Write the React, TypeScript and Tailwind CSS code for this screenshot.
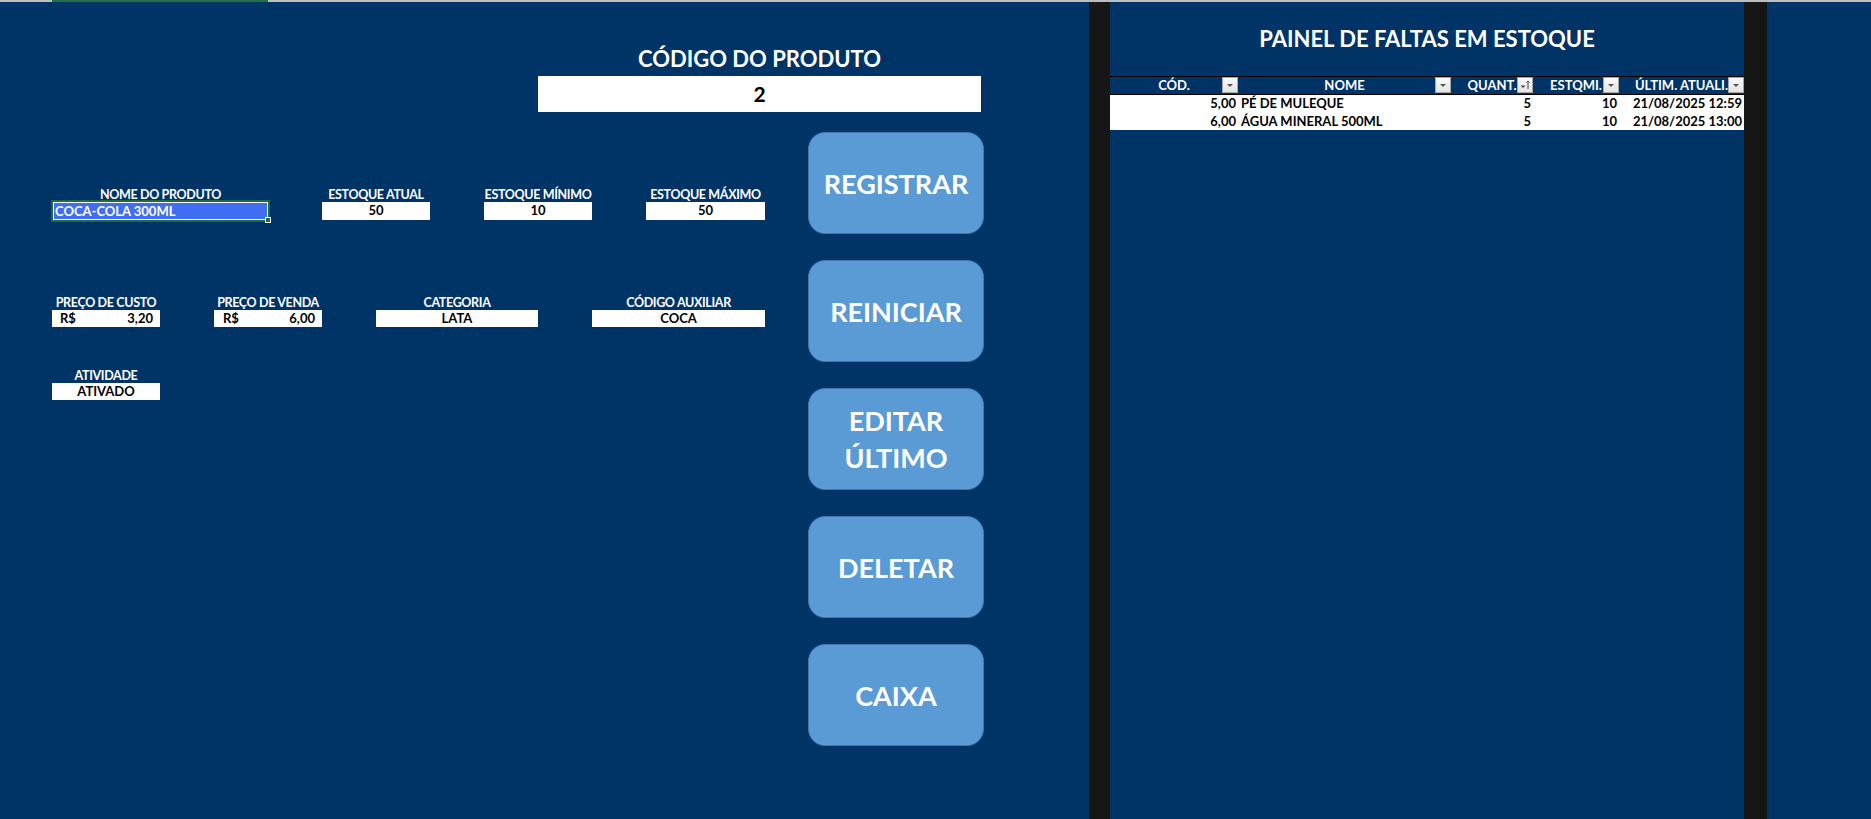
import React from 'react';

const FONT = { fontFamily: 'Lato, "Open Sans", "Liberation Sans", sans-serif' };

function Label({ text, clip }: { text: string; clip?: boolean }) {
  return (
    <div
      className={
        'h-[15px] w-full whitespace-nowrap text-center text-[12.5px] leading-[15px] tracking-[-0.35px] font-bold text-white ' +
        (clip ? 'overflow-hidden' : '')
      }
    >
      {text}
    </div>
  );
}

function Field({
  label,
  value,
  width,
  tall,
  clip,
}: {
  label: string;
  value: string;
  width: string;
  tall?: boolean;
  clip?: boolean;
}) {
  return (
    <div className={'flex flex-col ' + width}>
      <Label text={label} clip={clip} />
      <div
        className={
          'flex w-full items-center justify-center bg-white text-[13px] font-bold text-black ' +
          (tall ? 'h-[18px]' : 'h-[17px]')
        }
      >
        {value}
      </div>
    </div>
  );
}

function MoneyField({ label, value, pl }: { label: string; value: string; pl: string }) {
  return (
    <div className="flex w-[108px] flex-col">
      <Label text={label} />
      <div className={'flex h-[17px] w-full items-center justify-between bg-white pr-[7px] text-[13px] font-bold text-black ' + pl}>
        <span>R$</span>
        <span>{value}</span>
      </div>
    </div>
  );
}

function ActionButton({ children }: { children: React.ReactNode }) {
  return (
    <div className="flex h-[102px] w-[176px] items-center justify-center rounded-[17px] border border-[#4677a8] bg-[#5b9bd5] text-center text-[27px] leading-[37px] font-bold text-white">
      {children}
    </div>
  );
}

function FilterButton({ sort }: { sort?: boolean }) {
  return (
    <div className="absolute top-0 right-0 h-[16px] w-[16px] border border-[#a6a6a6] bg-gradient-to-b from-[#fafafa] to-[#e4e4e4]">
      <svg width="14" height="14" viewBox="0 0 14 14">
        {sort ? (
          <>
            <polygon points="2.5,7.5 7.5,7.5 5,10" fill="#444" />
            <line x1="10" y1="3" x2="10" y2="11" stroke="#444" strokeWidth="1" />
            <polyline points="8.5,4.5 10,3 11.5,4.5" fill="none" stroke="#444" strokeWidth="1" />
          </>
        ) : (
          <polygon points="4,6 10,6 7,9" fill="#555" />
        )}
      </svg>
    </div>
  );
}

const columns = [
  { name: 'CÓD.', w: 'w-[128px]' },
  { name: 'NOME', w: 'w-[213px]' },
  { name: 'QUANT.', w: 'w-[82px]', sort: true },
  { name: 'ESTQMI.', w: 'w-[86px]' },
  { name: 'ÚLTIM. ATUALI.', w: 'w-[125px]' },
];

const rows = [
  { cod: '5,00', nome: 'PÉ DE MULEQUE', quant: '5', min: '10', data: '21/08/2025 12:59' },
  { cod: '6,00', nome: 'ÁGUA MINERAL 500ML', quant: '5', min: '10', data: '21/08/2025 13:00' },
];

export default function App() {
  return (
    <div className="flex h-[819px] w-[1871px] flex-col overflow-hidden bg-[#003366]" style={FONT}>
      {/* column header strip */}
      <div className="flex h-[2px] w-full bg-[#bdbdbd]">
        <div className="ml-[52px] w-[216px] bg-[#217346]" />
      </div>

      <div className="flex flex-1">
        {/* form area */}
        <div className="flex w-[1089px] flex-col">
          <div className="flex flex-col items-center pt-[44px] pl-[538px] w-[981px]">
            <div className="h-[26px] w-[443px] text-center text-[22px] leading-[26px] font-bold text-white">
              CÓDIGO DO PRODUTO
            </div>
            <div className="mt-[4px] flex h-[36px] w-[443px] items-center justify-center bg-white text-[21px] font-bold text-black">
              2
            </div>
          </div>

          <div className="flex">
            <div className="flex w-[808px] flex-col pt-[75px]">
              <div className="flex pl-[53px]">
                <div className="flex w-[215px] flex-col">
                  <Label text="NOME DO PRODUTO" />
                  <div className="relative h-[18px] w-full border border-white bg-[#3f6ef3] pl-[1px] text-[13px] leading-[16px] font-bold text-white outline-2 outline-[#1d6b3f]">
                    COCA-COLA 300ML
                    <div className="absolute -right-[4px] -bottom-[4px] h-[6px] w-[6px] border border-white bg-[#1d6b3f]" />
                  </div>
                </div>
                <div className="ml-[54px]">
                  <Field label="ESTOQUE ATUAL" value="50" width="w-[108px]" tall />
                </div>
                <div className="ml-[54px]">
                  <Field label="ESTOQUE MÍNIMO" value="10" width="w-[108px]" tall />
                </div>
                <div className="ml-[54px]">
                  <Field label="ESTOQUE MÁXIMO" value="50" width="w-[119px]" tall />
                </div>
              </div>

              <div className="mt-[75px] flex pl-[52px]">
                <MoneyField label="PREÇO DE CUSTO" value="3,20" pl="pl-[8px]" />
                <div className="ml-[54px]">
                  <MoneyField label="PREÇO DE VENDA" value="6,00" pl="pl-[9px]" />
                </div>
                <div className="ml-[54px]">
                  <Field label="CATEGORIA" value="LATA" width="w-[162px]" />
                </div>
                <div className="ml-[54px]">
                  <Field label="CÓDIGO AUXILIAR" value="COCA" width="w-[173px]" />
                </div>
              </div>

              <div className="mt-[41px] flex pl-[52px]">
                <Field label="ATIVIDADE" value="ATIVADO" width="w-[108px]" />
              </div>
            </div>

            <div className="flex flex-col gap-[26px] pt-[20px]">
              <ActionButton>REGISTRAR</ActionButton>
              <ActionButton>REINICIAR</ActionButton>
              <ActionButton>
                EDITAR
                <br />
                ÚLTIMO
              </ActionButton>
              <ActionButton>DELETAR</ActionButton>
              <ActionButton>CAIXA</ActionButton>
            </div>
          </div>
        </div>

        <div className="w-[21px] bg-[#161616]" />

        {/* stock shortage panel */}
        <div className="flex w-[634px] flex-col pt-[24px]">
          <div className="h-[25px] text-center text-[22px] leading-[25px] font-bold text-white">
            PAINEL DE FALTAS EM ESTOQUE
          </div>
          <div className="mt-[25px] flex h-[19px] border-y border-black">
            {columns.map((c) => (
              <div key={c.name} className={'relative h-[17px] ' + c.w}>
                <div className="text-center text-[13px] leading-[17px] font-bold whitespace-nowrap text-white">{c.name}</div>
                <FilterButton sort={c.sort} />
              </div>
            ))}
          </div>
          {rows.map((r, i) => (
            <div
              key={r.cod}
              className={'flex bg-white text-[13px] font-bold text-black ' + (i === 0 ? 'h-[17px] leading-[17px]' : 'h-[18px] leading-[18px]')}
            >
              <div className="w-[128px] pr-[2px] text-right">{r.cod}</div>
              <div className="w-[213px] pl-[3px] whitespace-nowrap">{r.nome}</div>
              <div className="w-[82px] pr-[2px] text-right">{r.quant}</div>
              <div className="w-[86px] pr-[2px] text-right">{r.min}</div>
              <div className="w-[125px] pr-[2px] text-right whitespace-nowrap">{r.data}</div>
            </div>
          ))}
        </div>

        <div className="w-[23px] bg-[#161616]" />
        <div className="flex-1" />
      </div>
    </div>
  );
}
